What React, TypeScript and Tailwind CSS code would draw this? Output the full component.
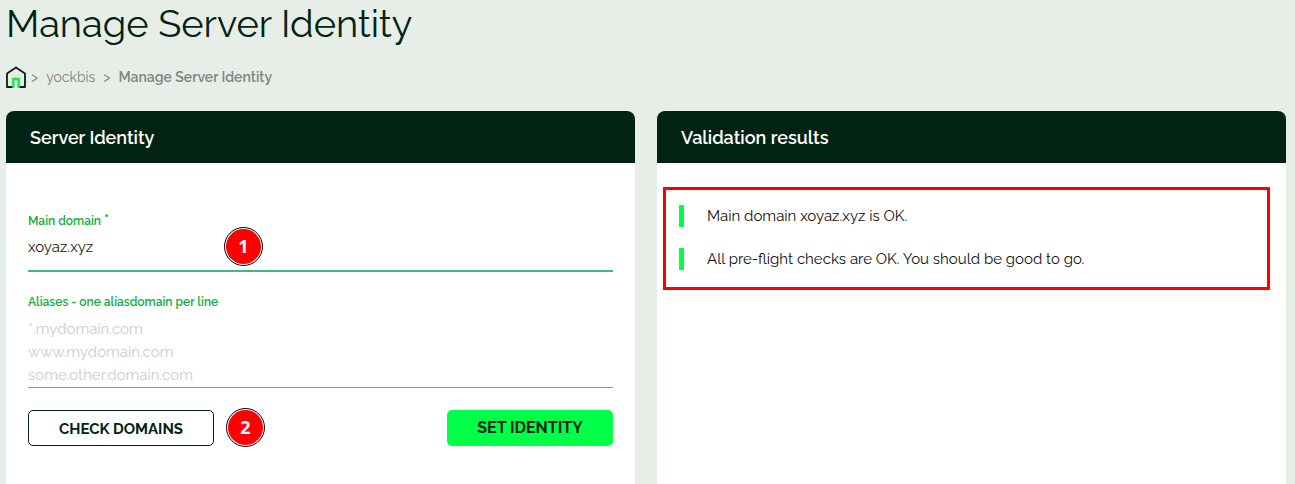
import type { ReactNode } from "react";

function HomeIcon() {
  return (
    <svg width="20" height="22" viewBox="0 0 20 22" fill="none" aria-hidden="true">
      <path d="M7 21H1V7.500L10 1.500l9 6V21h-6" stroke="#022213" strokeWidth="1.800" strokeLinejoin="round" />
      <path d="M7.300 22v-9h5.400v9" stroke="#00ff47" strokeWidth="1.900" />
      <path d="M6.300 21.500v-9.500h7.400v9.500M8.300 21.500v-7.500h3.400v7.500" stroke="#0fae43" strokeWidth="0.400" />
    </svg>
  );
}

function Step({ n, className }: { n: number; className: string }) {
  return (
    <span
      className={`absolute flex size-[39px] items-center justify-center rounded-full border border-black bg-white p-px ${className}`}
    >
      <span className="flex size-full items-center justify-center rounded-full bg-[#ff0000] pb-px font-['Open_Sans',sans-serif] text-[18px] leading-none font-bold text-white">
        {n}
      </span>
    </span>
  );
}

function Card({ title, children }: { title: string; children: ReactNode }) {
  return (
    <section className="flex flex-col overflow-hidden rounded-t-lg bg-white">
      <h2 className="bg-[#022213] px-6 pt-[13px] pb-[11px] text-[18px] leading-7 font-semibold text-white">{title}</h2>
      {children}
    </section>
  );
}

const results = ["Main domain xoyaz.xyz is OK.", "All pre-flight checks are OK. You should be good to go."];

export default function App() {
  return (
    <main className="flex min-h-screen flex-col bg-[#e7eee7] pr-[9px] pl-[6px] font-[Raleway,Lato,sans-serif] text-[#022213]">
      <h1 className="text-[38px] leading-12 font-normal">Manage Server Identity</h1>
      <nav aria-label="Breadcrumb" className="mt-[18px] mb-[23px] flex h-[22px] items-center text-[14px] leading-5 text-[#808581]">
        <a href="#home" aria-label="Home">
          <HomeIcon />
        </a>
        <span className="ml-[5px]">&gt;</span>
        <a href="#yockbis" className="ml-2">yockbis</a>
        <span className="ml-2">&gt;</span>
        <span className="ml-2 font-semibold">Manage Server Identity</span>
      </nav>
      <div className="grid flex-1 grid-cols-2 gap-[22px]">
        <Card title="Server Identity">
          <form className="flex flex-col px-[22px] pt-12 pb-[38px]" onSubmit={(e) => e.preventDefault()}>
            <label htmlFor="domain" className="h-5 text-[12px] leading-5 font-semibold text-[#0fae43]">
              Main domain <span className="text-[15px] leading-none">*</span>
            </label>
            <div className="relative">
              <input
                id="domain"
                defaultValue="xoyaz.xyz"
                className="block h-[41px] w-full border-b-2 border-[#41b883] pb-[7px] text-[15px] text-[#222222] outline-none"
              />
              <Step n={1} className="top-[-4px] left-[196px]" />
            </div>
            <label htmlFor="aliases" className="mt-5 text-[12px] leading-5 font-semibold text-[#0fae43]">
              Aliases - one aliasdomain per line
            </label>
            <textarea
              id="aliases"
              rows={3}
              placeholder={"*.mydomain.com\nwww.mydomain.com\nsome.other.domain.com"}
              className="mt-[6px] block h-[70px] resize-none overflow-hidden border-b border-[#949494] text-[15px] leading-[23px] outline-none placeholder:text-[#cccccc]"
            />
            <div className="mt-[22px] flex justify-between">
              <div className="relative">
                <button type="button" className="h-9 w-[186px] rounded-[5px] border border-[#022213] pt-0.5 text-[15px] font-bold">
                  CHECK DOMAINS
                </button>
                <Step n={2} className="top-[-2px] left-[198px]" />
              </div>
              <button type="submit" className="h-9 w-[166px] rounded-[5px] bg-[#00ff47] text-[16px] font-bold">
                SET IDENTITY
              </button>
            </div>
          </form>
        </Card>
        <Card title="Validation results">
          <ul className="mt-6 mr-4 ml-[6px] flex flex-col gap-[21px] border-3 border-[#ff0000] px-[13px] pt-[15px] pb-[17px] text-[15px] leading-[22px] text-[#111111]">
            {results.map((text) => (
              <li key={text} className="border-l-5 border-[#00ff47] pl-[23px]">
                {text}
              </li>
            ))}
          </ul>
        </Card>
      </div>
    </main>
  );
}
